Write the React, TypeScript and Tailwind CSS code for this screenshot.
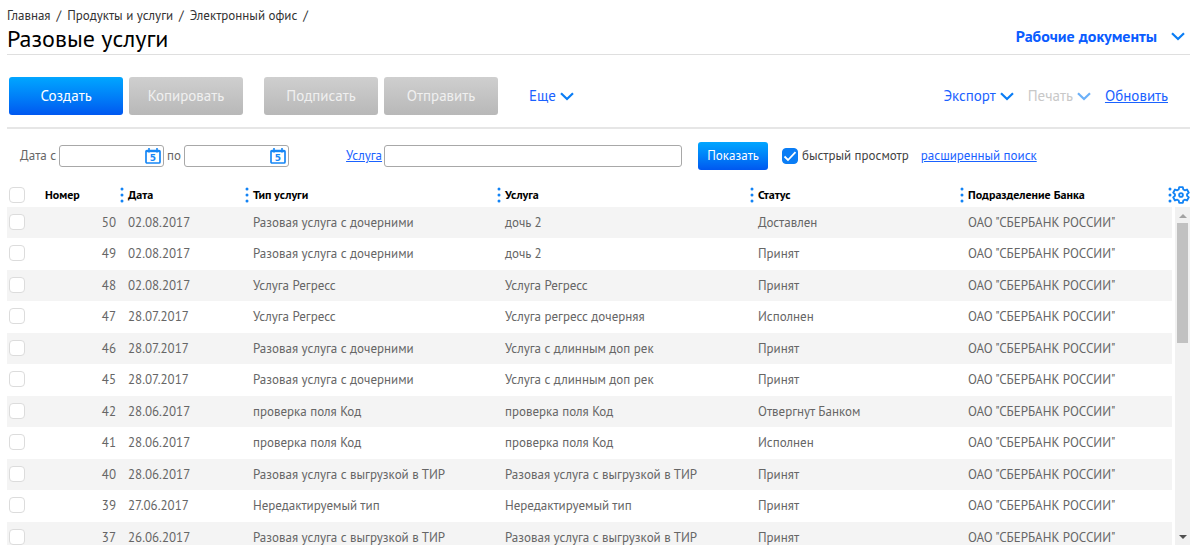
import React from "react";

interface ServiceRow {
  id: number;
  date: string;
  type: string;
  service: string;
  status: string;
}

const BANK = 'ОАО "СБЕРБАНК РОССИИ"';

const ROWS: ServiceRow[] = [
  { id: 50, date: "02.08.2017", type: "Разовая услуга с дочерними", service: "дочь 2", status: "Доставлен" },
  { id: 49, date: "02.08.2017", type: "Разовая услуга с дочерними", service: "дочь 2", status: "Принят" },
  { id: 48, date: "02.08.2017", type: "Услуга Регресс", service: "Услуга Регресс", status: "Принят" },
  { id: 47, date: "28.07.2017", type: "Услуга Регресс", service: "Услуга регресс дочерняя", status: "Исполнен" },
  { id: 46, date: "28.07.2017", type: "Разовая услуга с дочерними", service: "Услуга с длинным доп рек", status: "Принят" },
  { id: 45, date: "28.07.2017", type: "Разовая услуга с дочерними", service: "Услуга с длинным доп рек", status: "Принят" },
  { id: 42, date: "28.06.2017", type: "проверка поля Код", service: "проверка поля Код", status: "Отвергнут Банком" },
  { id: 41, date: "28.06.2017", type: "проверка поля Код", service: "проверка поля Код", status: "Исполнен" },
  { id: 40, date: "28.06.2017", type: "Разовая услуга с выгрузкой в ТИР", service: "Разовая услуга с выгрузкой в ТИР", status: "Принят" },
  { id: 39, date: "27.06.2017", type: "Нередактируемый тип", service: "Нередактируемый тип", status: "Принят" },
  { id: 37, date: "26.06.2017", type: "Разовая услуга с выгрузкой в ТИР", service: "Разовая услуга с выгрузкой в ТИР", status: "Принят" },
];

const CRUMBS = ["Главная", "Продукты и услуги", "Электронный офис"];

const COLUMNS = [
  { title: "Номер", width: "w-[83px]" },
  { title: "Дата", width: "w-[125px]" },
  { title: "Тип услуги", width: "w-[252px]" },
  { title: "Услуга", width: "w-[253px]" },
  { title: "Статус", width: "w-[210px]" },
  { title: "Подразделение Банка", width: "w-[208px]" },
];

const Chevron: React.FC<{ className?: string }> = ({ className = "" }) => (
  <svg viewBox="0 0 14 9" className={`h-[9px] w-[14px] shrink-0 ${className}`} fill="none">
    <path d="M1 1.2 L7 7 L13 1.2" stroke="#0a7df5" strokeWidth="2.2" />
  </svg>
);

const Dots = () => (
  <svg viewBox="0 0 4 16" className="h-4 w-1 shrink-0" fill="#1283f5">
    <circle cx="2" cy="2" r="1.5" />
    <circle cx="2" cy="8" r="1.5" />
    <circle cx="2" cy="14" r="1.5" />
  </svg>
);

const CalendarIcon = () => (
  <svg viewBox="0 0 16 16" className="h-4 w-4">
    <rect x="1" y="2.6" width="14" height="12.4" rx="1" fill="none" stroke="#1787f5" strokeWidth="1.7" />
    <path d="M1 2.600h14v1.600H1z" fill="#1787f5" />
    <path d="M4 0v4.500M12 0v4.500" stroke="#1787f5" strokeWidth="1.6" />
    <text x="8" y="12.8" textAnchor="middle" fontSize="9" fontWeight="700" fontFamily="DejaVu Sans" fill="#1787f5">
      5
    </text>
  </svg>
);

const GearIcon = () => (
  <svg viewBox="0 0 24 24" className="h-[18px] w-[18px]" fill="none" stroke="#1283f5" strokeWidth="2.5" strokeLinejoin="round">
    <path d="M9.6 1.5h4.8l.7 3.1 1.9 1.1 3-1 2.4 4.2-2.3 2.1v2l2.3 2.1-2.4 4.2-3-1-1.9 1.1-.7 3.1H9.6l-.7-3.1L7 18.3l-3 1-2.4-4.2L3.900 13v-2L1.600 8.900 4 4.700l3 1 1.900-1.100z" />
    <circle cx="12" cy="12" r="2.5" />
  </svg>
);

const ActionButton: React.FC<{ label: string; disabled?: boolean }> = ({ label, disabled }) => (
  <button
    disabled={disabled}
    className="h-[38px] w-[114px] rounded-[3px] bg-linear-to-b from-[#05a6ff] to-[#0057f0] text-[15px] text-white disabled:from-[#cfcfcf] disabled:to-[#b8b8b8] disabled:text-[#f0f0f0]"
  >
    {label}
  </button>
);

const RowCheckbox: React.FC<{ label: string }> = ({ label }) => (
  <input
    type="checkbox"
    aria-label={label}
    className="block h-4 w-4 appearance-none rounded-[4px] border border-[#dcdcdc] bg-white checked:bg-[#0a7df5]"
  />
);

const DateField: React.FC<{ id: string; label: string }> = ({ id, label }) => (
  <div className="flex items-center gap-[3px]">
    <label htmlFor={id}>{label}</label>
    <div className="relative">
      <input id={id} type="text" className="block h-[22px] w-[105px] rounded-[3px] border border-[#a8a8a8] bg-white pr-6 pl-1" />
      <button aria-label="Календарь" className="absolute top-[3px] right-[3px]">
        <CalendarIcon />
      </button>
    </div>
  </div>
);

const Header = () => (
  <header className="flex items-end justify-between border-b border-[#dfdfdf]">
    <div>
      <nav className="flex gap-[6px] pt-2 text-[13px] leading-4 text-[#333]">
        {CRUMBS.map((crumb) => (
          <React.Fragment key={crumb}>
            <a href="#">{crumb}</a>
            <span>/</span>
          </React.Fragment>
        ))}
      </nav>
      <h1 className="text-2xl leading-[30px] text-black">Разовые услуги</h1>
    </div>
    <button className="mb-[6px] flex items-center gap-[14px] pr-[5px] text-base font-bold text-[#0a5cff]">
      Рабочие документы
      <Chevron />
    </button>
  </header>
);

const Toolbar = () => (
  <div className="flex h-[74px] items-center justify-between border-b-2 border-[#e6e6e6] px-[2px] pt-[10px] text-[15px] text-[#1a62ff]">
    <div className="flex items-center">
      <div className="flex gap-[6px]">
        <ActionButton label="Создать" />
        <ActionButton label="Копировать" disabled />
      </div>
      <div className="ml-[21px] flex gap-[6px]">
        <ActionButton label="Подписать" disabled />
        <ActionButton label="Отправить" disabled />
      </div>
      <button className="ml-[31px] flex items-center gap-1">
        Еще
        <Chevron />
      </button>
    </div>
    <div className="flex items-center gap-[14px] pr-5">
      <button className="flex items-center gap-1">
        Экспорт
        <Chevron />
      </button>
      <button disabled className="flex items-center gap-1 text-[#c8c8c8]">
        Печать
        <Chevron className="opacity-60" />
      </button>
      <a href="#" className="underline">
        Обновить
      </a>
    </div>
  </div>
);

const Filters = () => (
  <div className="flex h-[54px] items-center pl-[13px] text-[13px] text-[#666]">
    <div className="flex gap-[3px]">
      <DateField id="date-from" label="Дата с" />
      <DateField id="date-to" label="по" />
    </div>
    <label htmlFor="service" className="ml-[57px] text-[#1a62ff] underline">
      Услуга
    </label>
    <input id="service" type="text" className="ml-[2px] h-[22px] w-[298px] rounded-[3px] border border-[#a8a8a8] bg-white px-1" />
    <button className="ml-4 h-7 w-[70px] rounded-[3px] bg-linear-to-b from-[#05a6ff] to-[#0057f0] text-white">
      Показать
    </button>
    <label className="ml-[14px] flex items-center gap-1 text-[#444]">
      <span className="relative">
        <input
          type="checkbox"
          defaultChecked
          className="peer block h-4 w-4 appearance-none rounded-[4px] border border-[#dcdcdc] bg-white checked:border-[#0a7df5] checked:bg-[#0a7df5]"
        />
        <svg viewBox="0 0 16 16" className="pointer-events-none absolute inset-0 hidden h-4 w-4 peer-checked:block" fill="none">
          <path d="M2.500 8.500 L6 12 L13.500 4.200" stroke="white" strokeWidth="1.8" />
        </svg>
      </span>
      быстрый просмотр
    </label>
    <a href="#" className="ml-3 text-[#1a62ff] underline">
      расширенный поиск
    </a>
  </div>
);

const ServicesTable = () => (
  <table className="w-full table-fixed border-collapse text-[13px]">
    <thead>
      <tr className="h-6 text-left text-xs text-black">
        <th className="w-[34px] pl-[2px]">
          <RowCheckbox label="Выбрать все" />
        </th>
        {COLUMNS.map((col) => (
          <th key={col.title} className={`pl-1 font-bold ${col.width}`}>
            <div className="flex items-center justify-between">
              {col.title}
              <Dots />
            </div>
          </th>
        ))}
      </tr>
    </thead>
    <tbody className="text-[#666]">
      {ROWS.map((row) => (
        <tr key={row.id} className="h-8 odd:h-[31px] odd:bg-[#f4f4f4]">
          <td className="pb-[2px] pl-[2px]">
            <RowCheckbox label={`Выбрать ${row.id}`} />
          </td>
          <td className="pr-2 text-right">{row.id}</td>
          <td className="pl-1">{row.date}</td>
          <td className="pl-1">{row.type}</td>
          <td className="pl-1">{row.service}</td>
          <td className="pl-1">{row.status}</td>
          <td className="pl-1">{BANK}</td>
        </tr>
      ))}
    </tbody>
  </table>
);

const ScrollTrack = () => (
  <div className="flex w-[15px] flex-1 flex-col items-center bg-[#f1f1f1] pt-[7px] pb-1">
    <svg viewBox="0 0 8 4" className="h-1 w-2" fill="#a3a3a3">
      <path d="M4 0 L8 4 H0z" />
    </svg>
    <div className="mt-[5px] h-[120px] w-[11px] bg-[#c1c1c1]" />
    <svg viewBox="0 0 8 4" className="mt-auto mb-[2px] h-1 w-2" fill="#505050">
      <path d="M0 0 H8 L4 4z" />
    </svg>
  </div>
);

export default function App() {
  return (
    <div className="flex h-screen flex-col overflow-hidden bg-white pr-[10px] pl-[7px] font-['PT_Sans','Noto_Sans',sans-serif]">
      <Header />
      <Toolbar />
      <Filters />
      <main className="flex min-h-0 flex-1">
        <div className="flex-1 overflow-hidden">
          <ServicesTable />
        </div>
        <div className="flex w-[18px] flex-col items-end">
          <button aria-label="Настройки" className="flex h-6 items-center">
            <GearIcon />
          </button>
          <ScrollTrack />
        </div>
      </main>
    </div>
  );
}
